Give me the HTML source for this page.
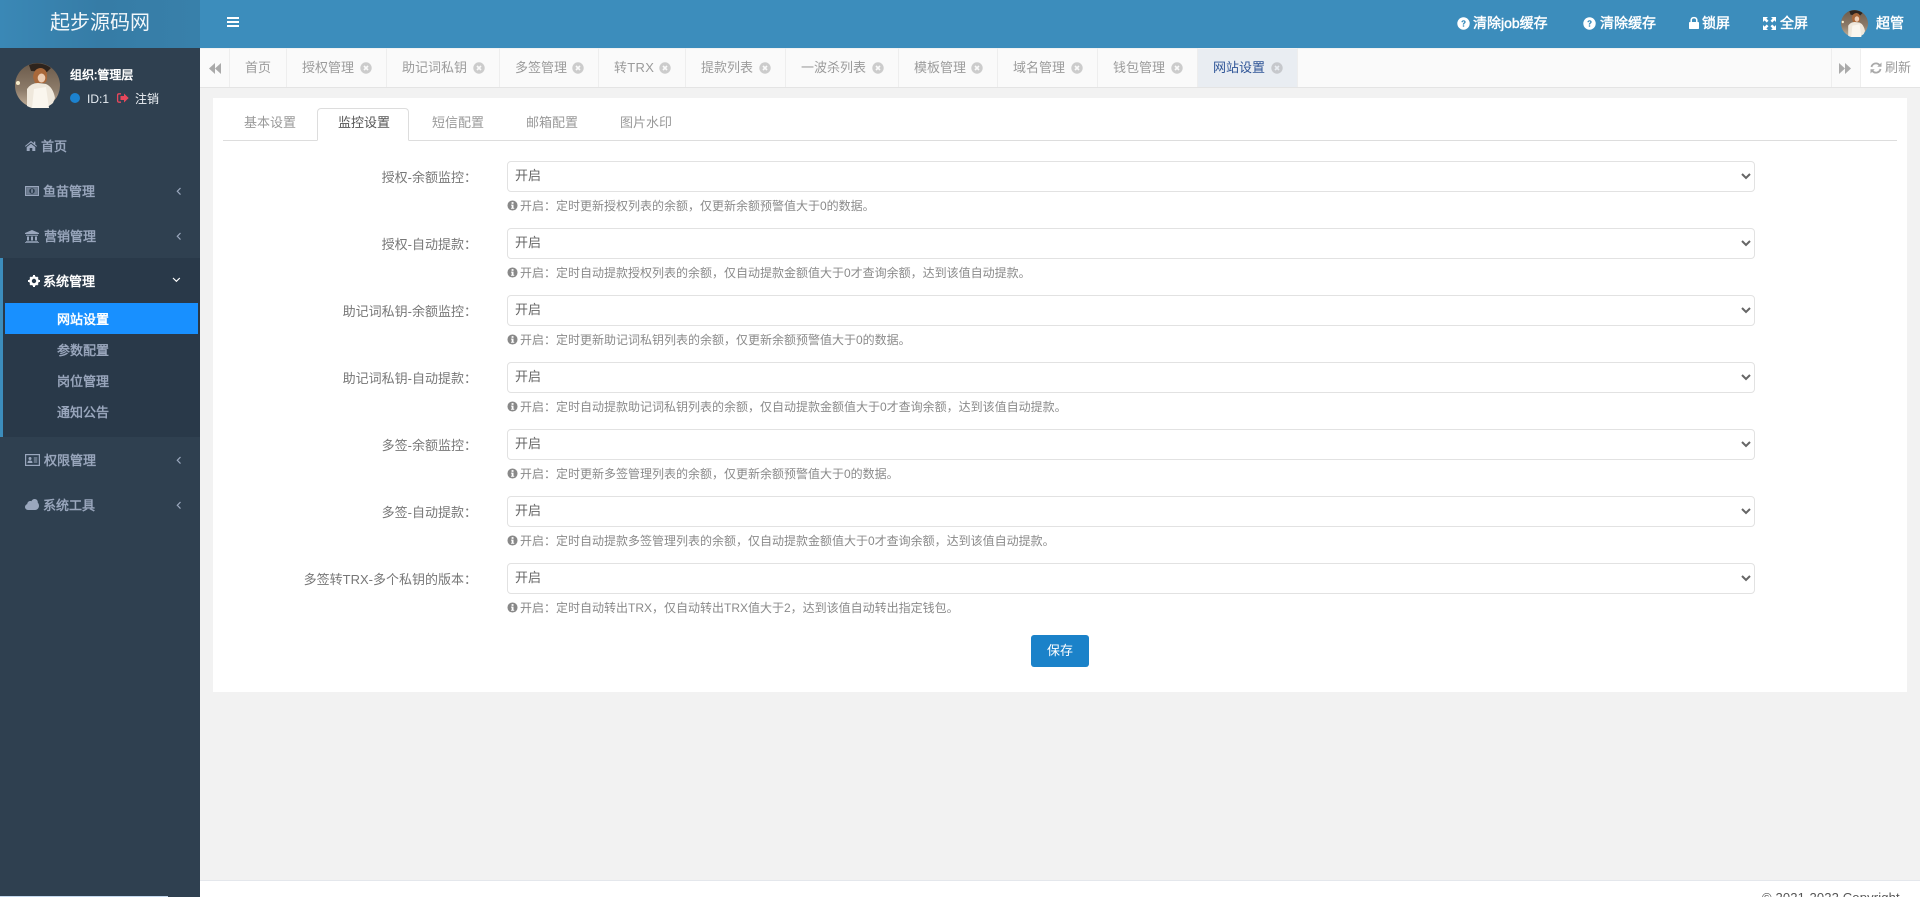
<!DOCTYPE html>
<html lang="zh-CN">
<head>
<meta charset="utf-8">
<title>起步源码网</title>
<style>
*{box-sizing:border-box}
html,body{margin:0;padding:0;width:1920px;height:897px;overflow:hidden;background:#f2f2f2;font-family:"Liberation Sans","Noto Sans CJK SC",sans-serif;font-size:13px}
#p{position:relative;width:1920px;height:897px;overflow:hidden;background:#f2f2f2}
.a{position:absolute}
.t{position:absolute;white-space:nowrap;line-height:20px;height:20px}
svg.a{display:block;overflow:visible}
.s{color:#9aa7bd;font-weight:400;-webkit-text-stroke:.45px #9aa7bd}
.w{color:#fff;-webkit-text-stroke:.5px #fff}
.h{color:#fff;font-size:14px;-webkit-text-stroke:.45px #fff}
.tb{color:#9b9b9b}
.ct{color:#999}
.lb{color:#777;text-align:right;width:240px;left:237px}
.hp{color:#8a8a8a;font-size:12px;left:520px}
.sel{position:absolute;left:507px;width:1248px;height:31px;border:1px solid #e2e2e2;border-radius:4px;background:#fff;color:#666;font:13px "Liberation Sans","Noto Sans CJK SC",sans-serif;padding:0 3px 3px;margin:0}
.d{position:absolute;top:48px;width:1px;height:39px;background:#eee}
</style>
</head>
<body>
<div id="p">
<svg width="0" height="0" style="position:absolute">
<defs>
<symbol id="x" viewBox="0 0 12 12"><circle cx="6" cy="6" r="5.7" fill="#ccc"/><path d="M4 4l4 4M8 4l-4 4" stroke="#fafafa" stroke-width="1.6"/></symbol>
<symbol id="xa" viewBox="0 0 12 12"><circle cx="6" cy="6" r="5.7" fill="#c6c8cc"/><path d="M4 4l4 4M8 4l-4 4" stroke="#e9edf2" stroke-width="1.6"/></symbol>
<symbol id="i" viewBox="0 0 12 12"><circle cx="6" cy="6" r="5.5" fill="#888"/><rect x="5" y="2.3" width="2.1" height="1.9" fill="#fff"/><path d="M4.4 5.1h2.7v3.5h.8v1H4.4v-1h.7V6.1h-.7z" fill="#fff"/></symbol>
<symbol id="q" viewBox="0 0 13 13"><circle cx="6.5" cy="6.5" r="6.2" fill="#fff"/><path d="M4.4 5.1C4.5 3.8 5.4 3.2 6.6 3.2 7.9 3.2 8.700 4 8.700 5 8.700 6.300 7.100 6.400 7.100 7.600H5.800C5.800 5.800 7.200 5.800 7.200 5 7.200 4.600 6.900 4.400 6.500 4.400 6.100 4.400 5.900 4.700 5.800 5.200z" fill="#3c8dbc"/><rect x="5.8" y="8.3" width="1.4" height="1.4" fill="#3c8dbc"/></symbol>
<linearGradient id="bg" x1="0" y1="0" x2="0" y2="1"><stop offset="0" stop-color="#6b5a4a"/><stop offset=".6" stop-color="#8d7c6a"/><stop offset="1" stop-color="#c4b29c"/></linearGradient>
<symbol id="av" viewBox="0 0 45 45">
<circle cx="22.500" cy="22.500" r="22.500" fill="url(#bg)"/>
<path d="M14 2 A22.500 22.500 0 0 1 36 5 L32 9 L16 8Z" fill="#2e241d"/>
<path d="M18 14 Q19 5 26 5 Q33 6 32 16 Q31 21 27 20 L20 20Z" fill="#a9683a"/>
<ellipse cx="26.500" cy="15" rx="3.800" ry="4.500" fill="#eccdb4"/>
<path d="M12 45 L12 26 Q16 20 23 20 L31 21 Q38 24 40 35 L38 40 A22.500 22.500 0 0 1 12 43Z" fill="#efe8dc"/>
<path d="M19 26 L31 24 L34 45 L17 45Z" fill="#faf6ee"/>
<circle cx="3" cy="20" r="2" fill="#f6eccb"/>
</symbol>
</defs>
</svg>

<!-- header -->
<div class="a" style="left:0;top:0;width:1920px;height:48px;background:#3c8dbc"></div>
<div class="a" style="left:0;top:0;width:200px;height:48px;background:linear-gradient(90deg,#3a88b6 0,#367ca6 50%,#3880aa 100%)"></div>
<div class="t" style="left:50px;top:10px;font-size:20px;line-height:26px;height:26px;color:#f2f7fa;width:100px;text-align:center">起步源码网</div>
<svg class="a" style="left:227px;top:17px" width="12" height="10"><path d="M0 0h12v2H0zM0 4h12v2H0zM0 8h12v2H0z" fill="#fff"/></svg>

<svg class="a" style="left:1457px;top:17px" width="13" height="13"><use href="#q"/></svg>
<span class="t h" style="left:1473px;top:13px">清除job缓存</span>
<svg class="a" style="left:1583px;top:17px" width="13" height="13"><use href="#q"/></svg>
<span class="t h" style="left:1600px;top:13px">清除缓存</span>
<svg class="a" style="left:1689px;top:17px" width="10" height="12"><path d="M2.200 5V3.400C2.200 1.500 3.400.6 5 .6S7.800 1.500 7.800 3.400V5" fill="none" stroke="#fff" stroke-width="1.5"/><rect y="5" width="10" height="7" rx=".8" fill="#fff"/></svg>
<span class="t h" style="left:1702px;top:13px">锁屏</span>
<svg class="a" style="left:1763px;top:17px" width="13" height="13"><path d="M0 0h5L3.400 1.600 5.500 3.700 3.700 5.500 1.600 3.400 0 5zM13 0v5L11.400 3.400 9.300 5.500 7.500 3.700 9.600 1.600 8 0zM0 13V8L1.600 9.600 3.700 7.500 5.500 9.300 3.400 11.400 5 13zM13 13H8L9.600 11.400 7.500 9.300 9.300 7.500 11.400 9.600 13 8z" fill="#fff"/></svg>
<span class="t h" style="left:1780px;top:13px">全屏</span>
<svg class="a" style="left:1841px;top:10px" width="27" height="27"><use href="#av"/></svg>
<span class="t h" style="left:1876px;top:13px">超管</span>

<!-- sidebar -->
<div class="a" style="left:0;top:48px;width:200px;height:849px;background:#2f4050"></div>
<svg class="a" style="left:15px;top:63px" width="45" height="45"><use href="#av"/></svg>
<span class="t w" style="left:70px;top:65px;font-size:12px">组织:管理层</span>
<div class="a" style="left:70px;top:93px;width:10px;height:10px;border-radius:50%;background:#1c82cf"></div>
<span class="t" style="left:87px;top:89px;font-size:12px;color:#e8eef4">ID:1</span>
<svg class="a" style="left:117px;top:93px" width="12" height="10"><path d="M4 .8H2C1 .8.6 1.400.6 2.200v5.600c0 .8.4 1.400 1.400 1.400h2" fill="none" stroke="#e8475b" stroke-width="1.3"/><path d="M7 .5L11.700 5 7 9.500V7H3.500V3H7z" fill="#e8475b"/></svg>
<span class="t" style="left:135px;top:89px;font-size:12px;color:#f0f4f8">注销</span>

<svg class="a" style="left:25px;top:141px" width="12" height="10"><path d="M6 0L8.800 2.300V.6h1.500v3L12 5l-.6.800L6 1.500.6 5.800 0 5zM6 2.700l4.300 3.400V10H7.300V7H4.700v3H1.700V6.100z" fill="#9aa7bd"/></svg>
<span class="t s" style="left:41px;top:137px">首页</span>

<svg class="a" style="left:25px;top:186px" width="14" height="10"><rect x=".6" y=".6" width="12.800" height="8.800" fill="none" stroke="#9aa7bd" stroke-width="1.200"/><rect x="1.500" y="1.500" width="11" height="7" fill="#9aa7bd" opacity=".6"/><circle cx="7" cy="5" r="2.800" fill="#2f4050"/><rect x="6.400" y="3.200" width="1.200" height="3.600" fill="#9aa7bd"/></svg>
<span class="t s" style="left:43px;top:182px">鱼苗管理</span>
<svg class="a" style="left:176px;top:187px" width="6" height="9"><path d="M4.500 1L1.300 4.300 4.500 7.600" fill="none" stroke="#9aa7bd" stroke-width="1.200"/></svg>

<svg class="a" style="left:25px;top:230px" width="14" height="13"><path d="M7 0l7 3v1H0V3zM1 4.800h12v1H1zM2 6.500h2v4H2zM6 6.500h2v4H6zM10 6.500h2v4h-2zM1 11h12v.8H1zM0 12.200h14V13H0z" fill="#9aa7bd"/></svg>
<span class="t s" style="left:44px;top:227px">营销管理</span>
<svg class="a" style="left:176px;top:232px" width="6" height="9"><path d="M4.500 1L1.300 4.300 4.500 7.600" fill="none" stroke="#9aa7bd" stroke-width="1.200"/></svg>

<div class="a" style="left:0;top:258px;width:200px;height:179px;background:#293949"></div>
<div class="a" style="left:0;top:258px;width:3px;height:179px;background:#3c8dbc"></div>
<svg class="a" style="left:28px;top:275px" width="12" height="12" viewBox="0 0 12 12"><circle cx="6" cy="6" r="3.500" fill="none" stroke="#fff" stroke-width="2.600"/><path d="M5 0h2v2H5zM5 10h2v2H5zM0 5h2v2H0zM10 5h2v2h-2zM1.500 2.900L2.900 1.500 4.300 2.900 2.900 4.300zM7.700 9.100L9.100 7.700 10.500 9.100 9.100 10.500zM1.500 9.100L2.900 7.700 4.300 9.100 2.900 10.500zM7.700 2.900L9.100 1.500 10.500 2.900 9.100 4.300z" fill="#fff"/></svg>
<span class="t w" style="left:43px;top:272px">系统管理</span>
<svg class="a" style="left:172px;top:277px" width="9" height="6"><path d="M1 1l3.400 3.300L7.800 1" fill="none" stroke="#fff" stroke-width="1.200"/></svg>

<div class="a" style="left:5px;top:303px;width:193px;height:31px;background:#1890ff"></div>
<span class="t w" style="left:57px;top:310px">网站设置</span>
<span class="t s" style="left:57px;top:341px">参数配置</span>
<span class="t s" style="left:57px;top:372px">岗位管理</span>
<span class="t s" style="left:57px;top:403px">通知公告</span>

<svg class="a" style="left:25px;top:454px" width="15" height="12"><rect x=".6" y=".6" width="13.800" height="10.800" fill="none" stroke="#9aa7bd" stroke-width="1.200"/><circle cx="5" cy="4.500" r="1.500" fill="#9aa7bd"/><path d="M2.500 9c0-2 1-2.500 2.500-2.500S7.500 7 7.500 9z" fill="#9aa7bd"/><path d="M8.800 4h3.500M8.800 6h3.500M8.800 8h3.500" stroke="#9aa7bd"/></svg>
<span class="t s" style="left:44px;top:451px">权限管理</span>
<svg class="a" style="left:176px;top:456px" width="6" height="9"><path d="M4.500 1L1.300 4.300 4.500 7.600" fill="none" stroke="#9aa7bd" stroke-width="1.200"/></svg>

<svg class="a" style="left:25px;top:499px" width="14" height="11"><path d="M3.300 11C1.400 11 0 9.700 0 8c0-1.400.9-2.500 2.200-2.900C2.300 3.300 3.600 2 5.300 2c.4 0 .8 0 1.100.2C7 .9 8.200 0 9.600 0c1.800 0 3.200 1.400 3.200 3.200v.5C13.500 4.300 14 5.400 14 6.700 14 9 12.200 11 10 11z" fill="#9aa7bd"/></svg>
<span class="t s" style="left:43px;top:496px">系统工具</span>
<svg class="a" style="left:176px;top:501px" width="6" height="9"><path d="M4.500 1L1.300 4.300 4.500 7.600" fill="none" stroke="#9aa7bd" stroke-width="1.200"/></svg>
<div class="a" style="left:0;top:896px;width:168px;height:1px;background:#c5d9ee"></div>

<!-- tab strip -->
<div class="a" style="left:200px;top:48px;width:1720px;height:40px;background:#fafafa;border-top:1px solid #f2f2f2;border-bottom:1px solid #e4e4e4"></div>
<div class="a" style="left:1198px;top:49px;width:99px;height:38px;background:#e9edf2"></div>
<div class="a" style="left:1860px;top:49px;width:60px;height:38px;background:#fff"></div>
<div class="d" style="left:229px"></div><div class="d" style="left:286px"></div><div class="d" style="left:386px"></div><div class="d" style="left:499px"></div><div class="d" style="left:598px"></div><div class="d" style="left:685px"></div><div class="d" style="left:785px"></div><div class="d" style="left:898px"></div><div class="d" style="left:997px"></div><div class="d" style="left:1097px"></div><div class="d" style="left:1197px"></div><div class="d" style="left:1297px"></div><div class="d" style="left:1831px"></div><div class="d" style="left:1860px"></div>
<svg class="a" style="left:209px;top:63px" width="12" height="11"><path d="M6 0v11L0 5.500zM12 0v11L6 5.500z" fill="#aaa"/></svg>
<span class="t tb" style="left:245px;top:58px">首页</span>
<span class="t tb" style="left:302px;top:58px">授权管理</span><svg class="a" style="left:360px;top:62px" width="12" height="12"><use href="#x"/></svg>
<span class="t tb" style="left:402px;top:58px">助记词私钥</span><svg class="a" style="left:473px;top:62px" width="12" height="12"><use href="#x"/></svg>
<span class="t tb" style="left:515px;top:58px">多签管理</span><svg class="a" style="left:572px;top:62px" width="12" height="12"><use href="#x"/></svg>
<span class="t tb" style="left:614px;top:58px;letter-spacing:.3px">转TRX</span><svg class="a" style="left:659px;top:62px" width="12" height="12"><use href="#x"/></svg>
<span class="t tb" style="left:701px;top:58px">提款列表</span><svg class="a" style="left:759px;top:62px" width="12" height="12"><use href="#x"/></svg>
<span class="t tb" style="left:801px;top:58px">一波杀列表</span><svg class="a" style="left:872px;top:62px" width="12" height="12"><use href="#x"/></svg>
<span class="t tb" style="left:914px;top:58px">模板管理</span><svg class="a" style="left:971px;top:62px" width="12" height="12"><use href="#x"/></svg>
<span class="t tb" style="left:1013px;top:58px">域名管理</span><svg class="a" style="left:1071px;top:62px" width="12" height="12"><use href="#x"/></svg>
<span class="t tb" style="left:1113px;top:58px">钱包管理</span><svg class="a" style="left:1171px;top:62px" width="12" height="12"><use href="#x"/></svg>
<span class="t" style="left:1213px;top:58px;color:#2f5597">网站设置</span><svg class="a" style="left:1271px;top:62px" width="12" height="12"><use href="#xa"/></svg>
<svg class="a" style="left:1839px;top:63px" width="12" height="11"><path d="M0 0v11l6-5.500zM6 0v11l6-5.500z" fill="#aaa"/></svg>
<svg class="a" style="left:1870px;top:62px" width="12" height="12" viewBox="0 0 12 12"><path d="M1.500 5A4.600 4.600 0 0 1 9.500 3M10.500 7A4.600 4.600 0 0 1 2.500 9" fill="none" stroke="#aaa" stroke-width="1.800"/><path d="M11.500 .5v4.200H7.300zM.5 11.500V7.300h4.200z" fill="#aaa"/></svg>
<span class="t tb" style="left:1885px;top:58px">刷新</span>

<!-- card -->
<div class="a" style="left:213px;top:98px;width:1694px;height:594px;background:#fff"></div>
<div class="a" style="left:223px;top:140px;width:1674px;height:1px;background:#ddd"></div>
<div class="a" style="left:317px;top:108px;width:92px;height:33px;background:#fff;border:1px solid #ddd;border-bottom:1px solid #fff;border-radius:4px 4px 0 0"></div>
<span class="t ct" style="left:244px;top:113px">基本设置</span>
<span class="t" style="left:338px;top:113px;color:#555">监控设置</span>
<span class="t ct" style="left:432px;top:113px">短信配置</span>
<span class="t ct" style="left:526px;top:113px">邮箱配置</span>
<span class="t ct" style="left:620px;top:113px">图片水印</span>

<!-- row 1 -->
<span class="t lb" style="top:168px">授权-余额监控：</span>
<select class="sel" style="top:161px"><option>开启</option></select>
<svg class="a" style="left:507px;top:200px" width="11" height="11"><use href="#i"/></svg>
<span class="t hp" style="top:196px">开启：定时更新授权列表的余额，仅更新余额预警值大于0的数据。</span>
<!-- row 2 -->
<span class="t lb" style="top:235px">授权-自动提款：</span>
<select class="sel" style="top:228px"><option>开启</option></select>
<svg class="a" style="left:507px;top:267px" width="11" height="11"><use href="#i"/></svg>
<span class="t hp" style="top:263px">开启：定时自动提款授权列表的余额，仅自动提款金额值大于0才查询余额，达到该值自动提款。</span>
<!-- row 3 -->
<span class="t lb" style="top:302px">助记词私钥-余额监控：</span>
<select class="sel" style="top:295px"><option>开启</option></select>
<svg class="a" style="left:507px;top:334px" width="11" height="11"><use href="#i"/></svg>
<span class="t hp" style="top:330px">开启：定时更新助记词私钥列表的余额，仅更新余额预警值大于0的数据。</span>
<!-- row 4 -->
<span class="t lb" style="top:369px">助记词私钥-自动提款：</span>
<select class="sel" style="top:362px"><option>开启</option></select>
<svg class="a" style="left:507px;top:401px" width="11" height="11"><use href="#i"/></svg>
<span class="t hp" style="top:397px">开启：定时自动提款助记词私钥列表的余额，仅自动提款金额值大于0才查询余额，达到该值自动提款。</span>
<!-- row 5 -->
<span class="t lb" style="top:436px">多签-余额监控：</span>
<select class="sel" style="top:429px"><option>开启</option></select>
<svg class="a" style="left:507px;top:468px" width="11" height="11"><use href="#i"/></svg>
<span class="t hp" style="top:464px">开启：定时更新多签管理列表的余额，仅更新余额预警值大于0的数据。</span>
<!-- row 6 -->
<span class="t lb" style="top:503px">多签-自动提款：</span>
<select class="sel" style="top:496px"><option>开启</option></select>
<svg class="a" style="left:507px;top:535px" width="11" height="11"><use href="#i"/></svg>
<span class="t hp" style="top:531px">开启：定时自动提款多签管理列表的余额，仅自动提款金额值大于0才查询余额，达到该值自动提款。</span>
<!-- row 7 -->
<span class="t lb" style="top:570px">多签转TRX-多个私钥的版本：</span>
<select class="sel" style="top:563px"><option>开启</option></select>
<svg class="a" style="left:507px;top:602px" width="11" height="11"><use href="#i"/></svg>
<span class="t hp" style="top:598px">开启：定时自动转出TRX，仅自动转出TRX值大于2，达到该值自动转出指定钱包。</span>

<div class="a" style="left:1031px;top:635px;width:58px;height:32px;background:#1b82c9;border-radius:3px;color:#fff;text-align:center;line-height:31px">保存</div>

<!-- footer -->
<div class="a" style="left:200px;top:880px;width:1720px;height:17px;background:#fff;border-top:1px solid #e4e7ec"></div>
<span class="t" style="left:1762px;top:888px;color:#555;letter-spacing:.15px">© 2021-2022 Copyright</span>
</div>
</body>
</html>
